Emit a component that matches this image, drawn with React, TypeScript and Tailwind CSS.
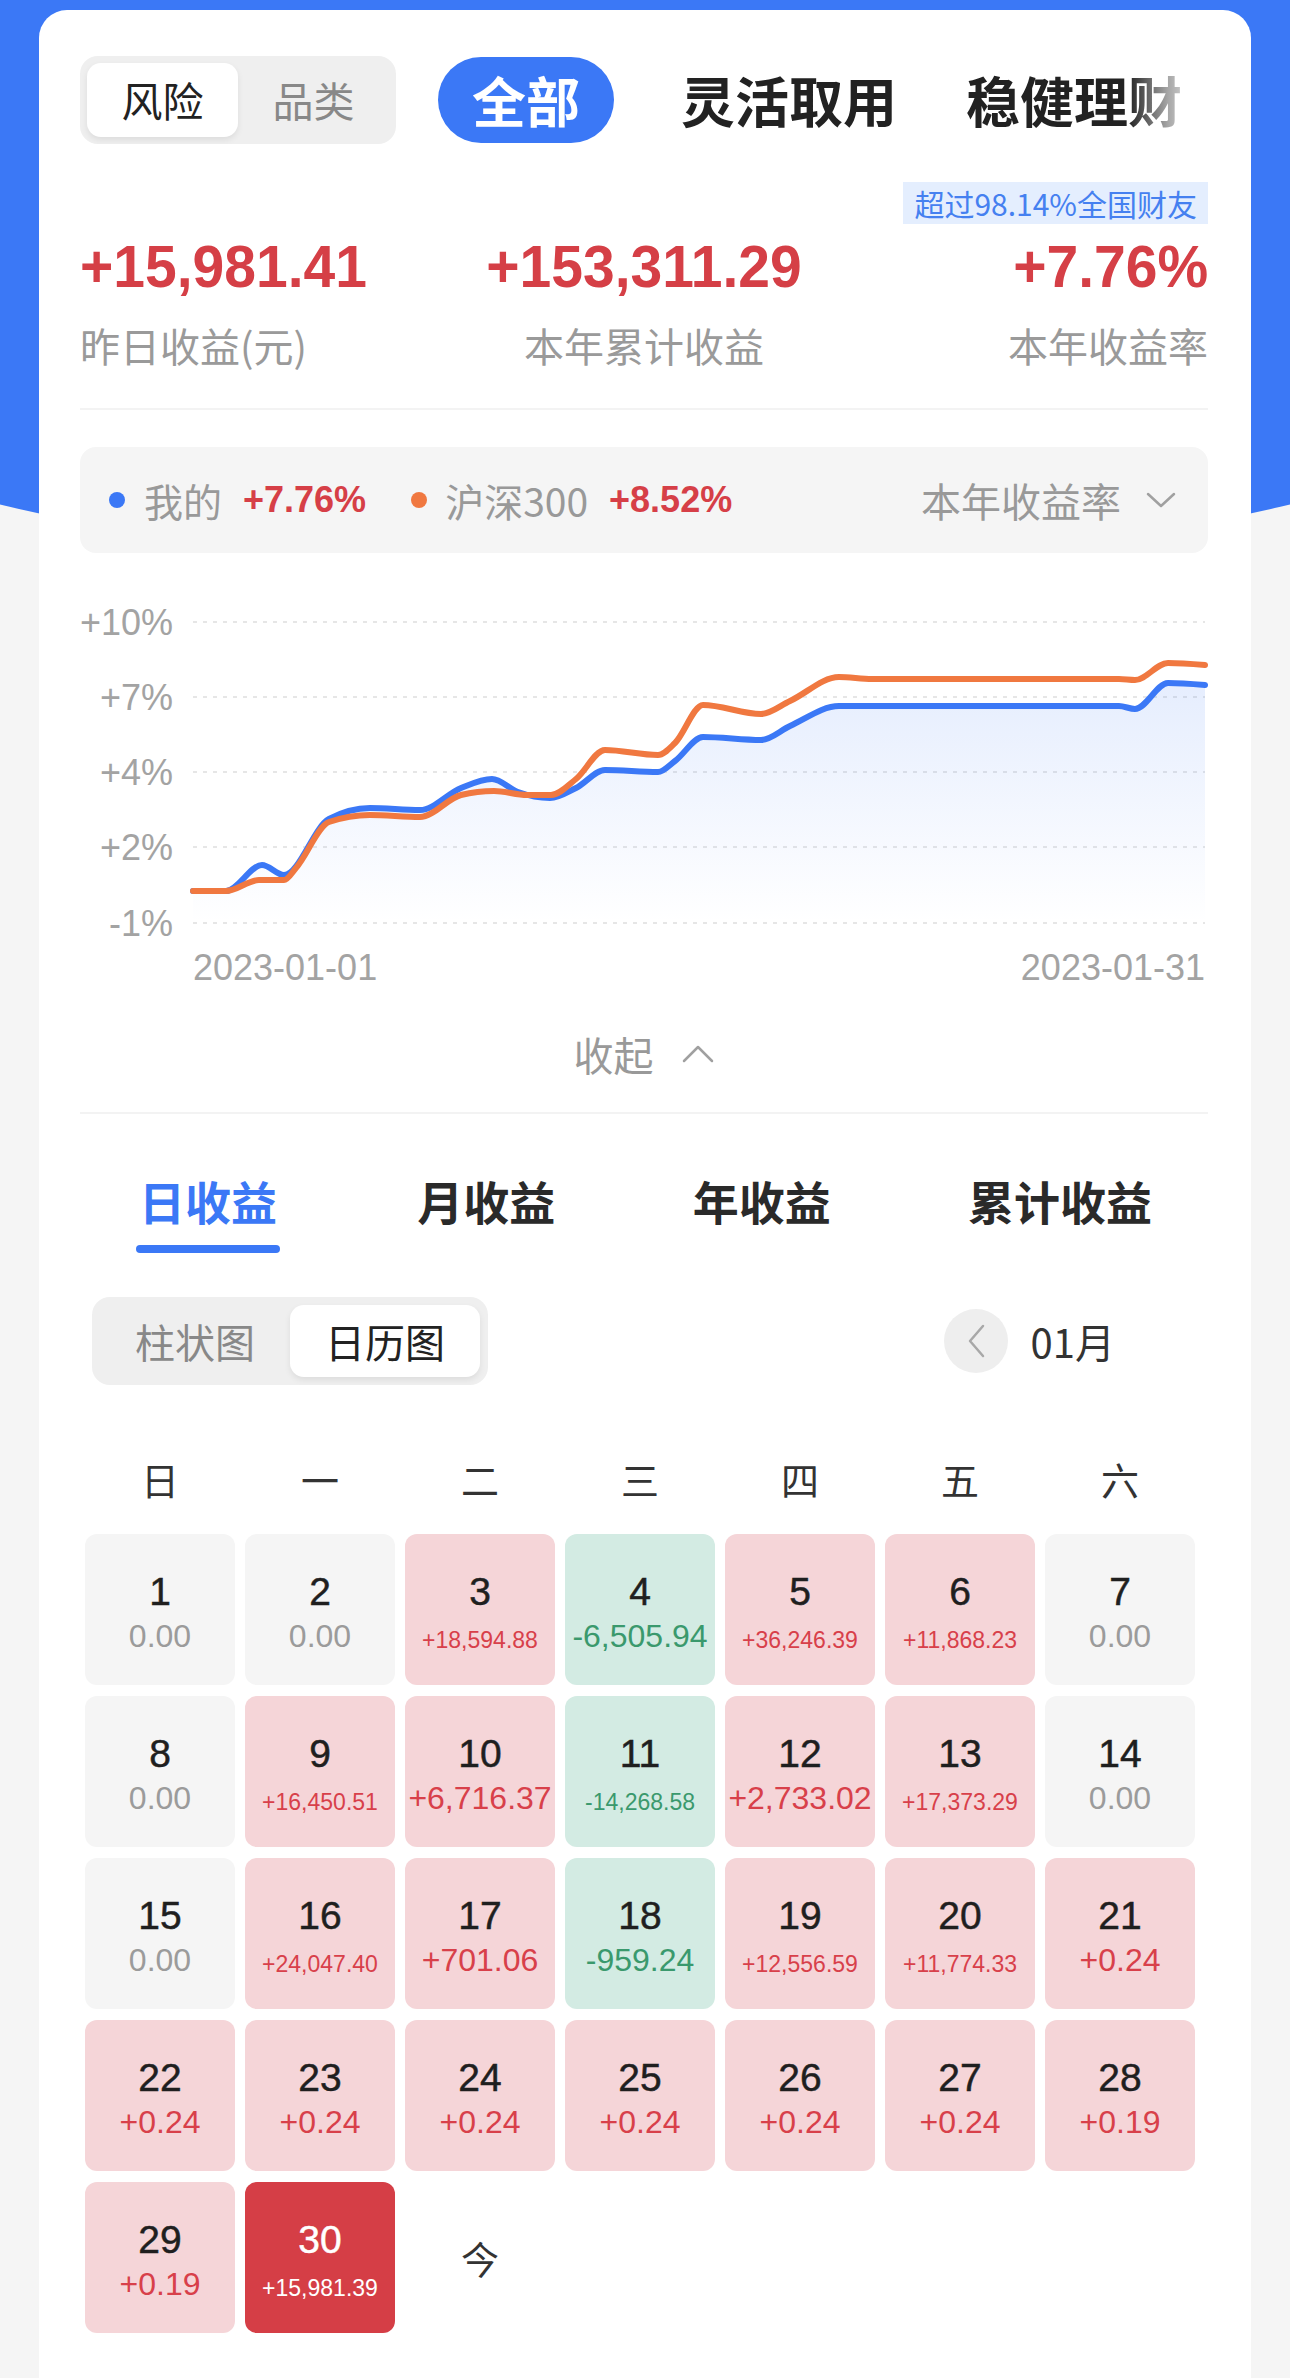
import React from 'react';

const NUM = "font-['Liberation_Sans','Arial',sans-serif]";

type Tone = 'zero' | 'up' | 'down' | 'today';

interface Day {
  day: number;
  value: string;
  tone: Tone;
}

const days: Day[] = [
  { day: 1, value: '0.00', tone: 'zero' },
  { day: 2, value: '0.00', tone: 'zero' },
  { day: 3, value: '+18,594.88', tone: 'up' },
  { day: 4, value: '-6,505.94', tone: 'down' },
  { day: 5, value: '+36,246.39', tone: 'up' },
  { day: 6, value: '+11,868.23', tone: 'up' },
  { day: 7, value: '0.00', tone: 'zero' },
  { day: 8, value: '0.00', tone: 'zero' },
  { day: 9, value: '+16,450.51', tone: 'up' },
  { day: 10, value: '+6,716.37', tone: 'up' },
  { day: 11, value: '-14,268.58', tone: 'down' },
  { day: 12, value: '+2,733.02', tone: 'up' },
  { day: 13, value: '+17,373.29', tone: 'up' },
  { day: 14, value: '0.00', tone: 'zero' },
  { day: 15, value: '0.00', tone: 'zero' },
  { day: 16, value: '+24,047.40', tone: 'up' },
  { day: 17, value: '+701.06', tone: 'up' },
  { day: 18, value: '-959.24', tone: 'down' },
  { day: 19, value: '+12,556.59', tone: 'up' },
  { day: 20, value: '+11,774.33', tone: 'up' },
  { day: 21, value: '+0.24', tone: 'up' },
  { day: 22, value: '+0.24', tone: 'up' },
  { day: 23, value: '+0.24', tone: 'up' },
  { day: 24, value: '+0.24', tone: 'up' },
  { day: 25, value: '+0.24', tone: 'up' },
  { day: 26, value: '+0.24', tone: 'up' },
  { day: 27, value: '+0.24', tone: 'up' },
  { day: 28, value: '+0.19', tone: 'up' },
  { day: 29, value: '+0.19', tone: 'up' },
  { day: 30, value: '+15,981.39', tone: 'today' },
];

const cellBg: Record<Tone, string> = {
  zero: 'bg-[#f5f5f5]',
  up: 'bg-[#f5d5d8]',
  down: 'bg-[#d3ebe3]',
  today: 'bg-[#d53e46]',
};

const valueColor: Record<Tone, string> = {
  zero: 'text-[#9b9b9b]',
  up: 'text-[#d8404a]',
  down: 'text-[#3a996d]',
  today: 'text-white',
};

// chart points, in svg coords
const mine: [number, number][] = [
  [113, 299], [146, 299], [182, 273], [204, 283], [249, 227], [290, 216], [340, 218],
  [381, 196], [412, 187], [438, 200], [470, 206], [496, 196], [525, 178], [578, 180],
  [595, 169], [623, 145], [681, 148], [710, 134], [759, 114], [792, 114], [1039, 114],
  [1055, 117], [1088, 91], [1125, 93],
];

const index300: [number, number][] = [
  [113, 299], [146, 299], [179, 288], [204, 288], [216, 276], [249, 230], [290, 223],
  [340, 225], [381, 203], [414, 199], [447, 203], [471, 203], [496, 187], [525, 158],
  [578, 163], [595, 151], [623, 113], [681, 122], [710, 109], [759, 85], [792, 87],
  [1039, 87], [1055, 88], [1088, 71], [1125, 73],
];

// monotone-x cubic, no overshoot on uneven spacing
function smooth(pts: [number, number][]) {
  const n = pts.length;
  const t: number[] = new Array(n).fill(0);
  const sign = (v: number) => (v < 0 ? -1 : v > 0 ? 1 : 0);
  for (let i = 1; i < n - 1; i++) {
    const h0 = pts[i][0] - pts[i - 1][0];
    const h1 = pts[i + 1][0] - pts[i][0];
    const s0 = (pts[i][1] - pts[i - 1][1]) / h0;
    const s1 = (pts[i + 1][1] - pts[i][1]) / h1;
    const p = (s0 * h1 + s1 * h0) / (h0 + h1);
    t[i] = (sign(s0) + sign(s1)) * Math.min(Math.abs(s0), Math.abs(s1), 0.5 * Math.abs(p)) || 0;
  }
  const hs = pts[1][0] - pts[0][0];
  t[0] = (3 * (pts[1][1] - pts[0][1]) / hs - t[1]) / 2;
  const he = pts[n - 1][0] - pts[n - 2][0];
  t[n - 1] = (3 * (pts[n - 1][1] - pts[n - 2][1]) / he - t[n - 2]) / 2;

  let d = `M${pts[0][0]},${pts[0][1]}`;
  for (let i = 0; i < n - 1; i++) {
    const [x0, y0] = pts[i];
    const [x1, y1] = pts[i + 1];
    const dx = (x1 - x0) / 3;
    d += ` C${x0 + dx},${y0 + dx * t[i]} ${x1 - dx},${y1 - dx * t[i + 1]} ${x1},${y1}`;
  }
  return d;
}

const gridY = [30, 105, 180, 255, 331];
const gridLabels = ['+10%', '+7%', '+4%', '+2%', '-1%'];

function Chart() {
  const minePath = smooth(mine);
  return (
    <svg width="1128" height="410" viewBox="0 0 1128 410" className="mt-[39px] block">
      <defs>
        <linearGradient id="fill" x1="0" y1="0" x2="0" y2="1">
          <stop offset="0%" stopColor="#3b78f6" stopOpacity="0.13" />
          <stop offset="100%" stopColor="#3b78f6" stopOpacity="0" />
        </linearGradient>
      </defs>
      {gridY.map((y, i) => (
        <g key={y}>
          <line x1="113" x2="1125" y1={y} y2={y} stroke="#e6e6e6" strokeWidth="2" strokeDasharray="4 6" />
          <text
            x="93"
            y={y + 13}
            textAnchor="end"
            fontSize="36"
            fill="#a3a3a3"
            fontFamily="'Liberation Sans', sans-serif"
          >
            {gridLabels[i]}
          </text>
        </g>
      ))}
      <path d={`${minePath} L1125,331 L113,331 Z`} fill="url(#fill)" />
      <path d={minePath} fill="none" stroke="#3b78f6" strokeWidth="6" strokeLinecap="round" strokeLinejoin="round" />
      <path d={smooth(index300)} fill="none" stroke="#f07840" strokeWidth="6" strokeLinecap="round" strokeLinejoin="round" />
      <text x="113" y="388" fontSize="36" fill="#a3a3a3" fontFamily="'Liberation Sans', sans-serif">
        2023-01-01
      </text>
      <text x="1125" y="388" textAnchor="end" fontSize="36" fill="#a3a3a3" fontFamily="'Liberation Sans', sans-serif">
        2023-01-31
      </text>
    </svg>
  );
}

function DayCell({ d }: { d: Day }) {
  const small = d.value.length >= 10;
  return (
    <div className={`mx-[5px] flex h-[151px] flex-col items-center rounded-[12px] pt-[38px] ${cellBg[d.tone]}`}>
      <div
        className={`${NUM} text-[39px] leading-none [-webkit-text-stroke:0.5px_currentColor] ${
          d.tone === 'today' ? 'text-white' : 'text-[#1f1f1f]'
        }`}
      >
        {d.day}
      </div>
      <div className="mt-[9px] flex h-[32px] items-end justify-center">
        <span className={`${NUM} leading-none ${small ? 'text-[23px]' : 'text-[32px]'} ${valueColor[d.tone]}`}>
          {d.value}
        </span>
      </div>
    </div>
  );
}

export default function App() {
  return (
    <div className="relative min-h-[2378px] overflow-hidden bg-[#f5f5f5] font-['Noto_Sans_CJK_SC','Noto_Sans',sans-serif]">
      <div className="absolute left-[-355px] top-0 h-[572px] w-[2000px] rounded-b-[1000px_286px] bg-[#3b78f6]" />

      <div className="relative mx-[39px] mt-[10px] rounded-t-[28px] bg-white pb-[60px] pl-[41px] pr-[43px] pt-[46px]">
        {/* top tabs */}
        <div className="relative flex items-center overflow-hidden whitespace-nowrap">
          <div className="flex h-[88px] w-[316px] shrink-0 items-center rounded-[18px] bg-[#efefef] p-[7px]">
            <div className="flex h-full flex-1 items-center justify-center rounded-[14px] bg-white text-[41px] text-[#222] shadow-[0_3px_6px_rgba(0,0,0,0.08)]">
              风险
            </div>
            <div className="flex h-full flex-1 items-center justify-center text-[41px] text-[#888]">品类</div>
          </div>
          <div className="ml-[42px] flex h-[86px] shrink-0 items-center rounded-full bg-[#3b78f6] px-[34px] text-[54px] font-bold leading-none text-white">
            全部
          </div>
          <div className="ml-[67px] shrink-0 text-[54px] font-bold leading-none text-[#222]">灵活取用</div>
          <div className="ml-[69px] shrink-0 text-[54px] font-bold leading-none text-[#222]">稳健理财</div>
          <div className="absolute right-0 top-0 h-full w-[80px] bg-gradient-to-l from-white via-white/60 to-transparent" />
        </div>

        {/* badge */}
        <div className="mt-[38px] flex justify-end">
          <div className="h-[42px] bg-[#e4eefe] px-[11px] text-[30px] leading-[42px] text-[#4580f0]">
            超过98.14%全国财友
          </div>
        </div>

        {/* summary */}
        <div className="mt-[13px] grid grid-cols-3">
          <div className="flex flex-col items-start">
            <div className={`${NUM} inline-block origin-left scale-x-[0.95] text-[60px] font-bold leading-none text-[#d53f46]`}>
              +15,981.41
            </div>
            <div className="mt-[28px] text-[40px] leading-none text-[#9a9a9a]">昨日收益(元)</div>
          </div>
          <div className="flex flex-col items-center">
            <div className={`${NUM} inline-block origin-center scale-x-[0.95] text-[60px] font-bold leading-none text-[#d53f46]`}>
              +153,311.29
            </div>
            <div className="mt-[28px] text-[40px] leading-none text-[#9a9a9a]">本年累计收益</div>
          </div>
          <div className="flex flex-col items-end">
            <div className={`${NUM} inline-block origin-right scale-x-[0.95] text-[60px] font-bold leading-none text-[#d53f46]`}>
              +7.76%
            </div>
            <div className="mt-[28px] text-[40px] leading-none text-[#9a9a9a]">本年收益率</div>
          </div>
        </div>

        <div className="mt-[43px] h-[2px] bg-[#f3f3f3]" />

        {/* legend */}
        <div className="mt-[37px] flex h-[106px] items-center whitespace-nowrap rounded-[16px] bg-[#f5f5f5] pl-[29px] pr-[32px]">
          <span className="h-[16px] w-[16px] rounded-full bg-[#3b78f6]" />
          <span className="ml-[19px] text-[39px] leading-none text-[#999]">我的</span>
          <span className={`${NUM} ml-[21px] text-[36px] font-bold leading-none text-[#d63f47]`}>+7.76%</span>
          <span className="ml-[45px] h-[16px] w-[16px] rounded-full bg-[#f07840]" />
          <span className="ml-[18px] text-[39px] leading-none text-[#999]">沪深300</span>
          <span className={`${NUM} ml-[21px] text-[36px] font-bold leading-none text-[#d63f47]`}>+8.52%</span>
          <div className="ml-auto flex items-center">
            <span className="text-[40px] leading-none text-[#999]">本年收益率</span>
            <svg width="30" height="18" viewBox="0 0 30 18" className="ml-[25px]">
              <path d="M2 3 L15 15 L28 3" fill="none" stroke="#a0a0a0" strokeWidth="2.5" strokeLinecap="round" strokeLinejoin="round" />
            </svg>
          </div>
        </div>

        <Chart />

        {/* collapse */}
        <div className="mt-[32px] flex items-center justify-center">
          <span className="text-[40px] leading-none text-[#999]">收起</span>
          <svg width="34" height="20" viewBox="0 0 34 20" className="ml-[27px]">
            <path d="M3 17 L17 3 L31 17" fill="none" stroke="#a0a0a0" strokeWidth="2.5" strokeLinecap="round" strokeLinejoin="round" />
          </svg>
        </div>

        <div className="mt-[38px] h-[2px] bg-[#f3f3f3]" />

        {/* income tabs */}
        <div className="mt-[63px] flex items-start justify-between px-[56px]">
          <div className="flex flex-col items-center">
            <span className="text-[46px] font-bold leading-none text-[#3b78f6]">日收益</span>
            <span className="mt-[22px] h-[8px] w-[144px] rounded-full bg-[#3b78f6]" />
          </div>
          <span className="text-[46px] font-bold leading-none text-[#2a2a2a]">月收益</span>
          <span className="text-[46px] font-bold leading-none text-[#2a2a2a]">年收益</span>
          <span className="text-[46px] font-bold leading-none text-[#2a2a2a]">累计收益</span>
        </div>

        {/* view switch + month */}
        <div className="mt-[44px] flex items-center">
          <div className="ml-[12px] flex h-[88px] w-[396px] items-center rounded-[18px] bg-[#efefef] p-[8px]">
            <div className="flex h-full flex-1 items-center justify-center text-[40px] text-[#888]">柱状图</div>
            <div className="flex h-full flex-1 items-center justify-center rounded-[14px] bg-white text-[40px] text-[#222] shadow-[0_3px_6px_rgba(0,0,0,0.08)]">
              日历图
            </div>
          </div>
          <div className="ml-auto flex items-center pr-[6px]">
            <div className="flex h-[64px] w-[64px] items-center justify-center rounded-full bg-[#eeeeee]">
              <svg width="22" height="36" viewBox="0 0 22 36">
                <path d="M18 3 L5 18 L18 33" fill="none" stroke="#a8a8a8" strokeWidth="2.5" strokeLinecap="round" strokeLinejoin="round" />
              </svg>
            </div>
            <span className="ml-[23px] text-[40px] leading-none text-[#333]">01月</span>
            <div className="invisible ml-[23px] h-[64px] w-[64px]" />
          </div>
        </div>

        {/* weekdays */}
        <div className="mt-[75px] grid w-[1120px] grid-cols-7 text-center text-[38px] leading-none text-[#333]">
          {['日', '一', '二', '三', '四', '五', '六'].map((w) => (
            <span key={w}>{w}</span>
          ))}
        </div>

        {/* calendar */}
        <div className="mt-[36px] grid w-[1120px] grid-cols-7 gap-y-[11px]">
          {days.map((d) => (
            <DayCell key={d.day} d={d} />
          ))}
          <div className="mx-[5px] flex h-[151px] items-center justify-center text-[38px] text-[#333]">今</div>
        </div>
      </div>
    </div>
  );
}
